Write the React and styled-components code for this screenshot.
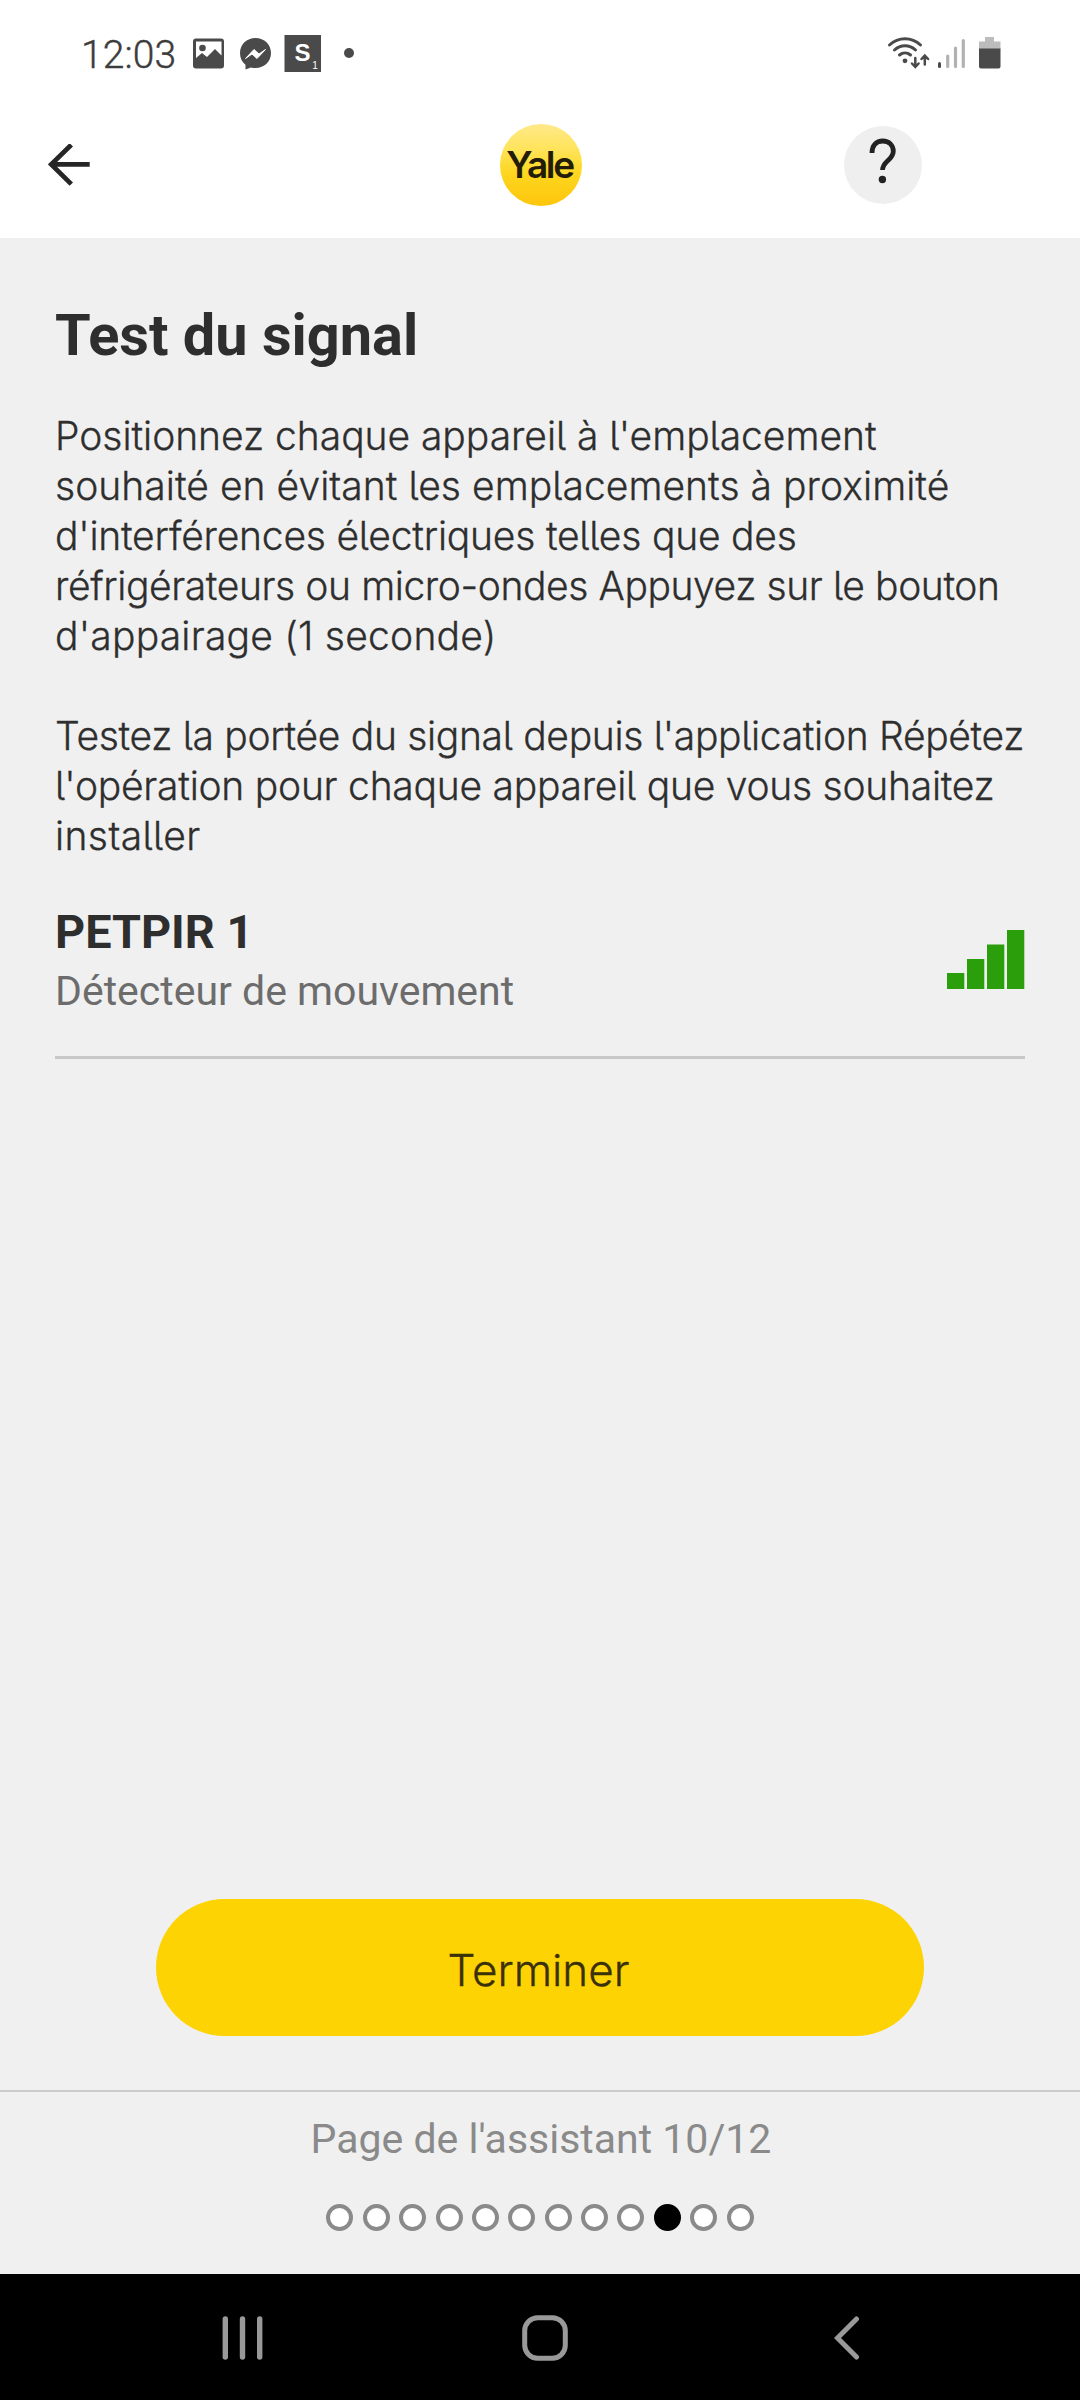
import React from 'react';
import styled, { createGlobalStyle } from 'styled-components';

const instructions = [
  { text: "Positionnez chaque appareil à l'emplacement", spacing: -0.04 },
  { text: 'souhaité en évitant les emplacements à proximité', spacing: 0.04 },
  { text: "d'interférences électriques telles que des", spacing: -0.22 },
  { text: 'réfrigérateurs ou micro-ondes Appuyez sur le bouton', spacing: -0.41 },
  { text: "d'appairage (1 seconde)", spacing: 0.22 },
];

const testing = [
  { text: "Testez la portée du signal depuis l'application Répétez", spacing: -0.32 },
  { text: "l'opération pour chaque appareil que vous souhaitez", spacing: -0.25 },
  { text: 'installer', spacing: 0.4 },
];

const TOTAL_PAGES = 12;
const CURRENT_PAGE = 10;

const StatusIcons = () => (
  <svg width="170" height="40" viewBox="190 33 170 40">
    <g fill="#4a4a4a">
      <path
        fillRule="evenodd"
        d="M196 38.500h25a3 3 0 0 1 3 3v24a3 3 0 0 1-3 3h-25a3 3 0 0 1-3-3v-24a3 3 0 0 1 3-3zM196 41.500V58l6-5 5 4 8-8 6.500 6.500V41.500z"
      />
      <circle cx="202.500" cy="48" r="3.300" />
      <path d="M255.500 38c8.800 0 15.500 6.400 15.500 15s-6.700 15-15.500 15c-1.600 0-3.100-.2-4.600-.6l-5.400 2.100v-4.700C242 62.100 240 58 240 53c0-8.600 6.700-15 15.500-15z" />
      <path d="M284.500 35H321v37h-36.500z" />
      <circle cx="349" cy="53" r="5" />
    </g>
    <path d="M245.500 58.500l8.500-9 5 4.500 6.500-4.500-8.500 9-5-4.500z" fill="#fff" stroke="#fff" strokeLinejoin="round" />
    <text x="302.500" y="61" fill="#fff" fontFamily="Liberation Sans" fontWeight="700" fontSize="24" textAnchor="middle">S</text>
    <text x="315" y="68.500" fill="#fff" fontFamily="Liberation Sans" fontSize="10" textAnchor="middle">1</text>
  </svg>
);

const ConnectionIcons = () => (
  <svg width="116" height="40" viewBox="886 32.500 116 40">
    <g fill="none" stroke="#4a4a4a" strokeWidth="3" strokeLinecap="round">
      <path d="M889.500 44.500c9-8.300 22-8.300 31 0M894.500 49.500c6-5.600 15-5.600 21 0M899.500 54.500c3.200-2.800 7.800-2.800 11 0" />
      <path strokeWidth="2.500" d="M915.300 57.500v8.500m-3.300-3l3.300 3.500 3.300-3.500M924.800 64v-8.500m-3.300 3l3.300-3.500 3.300 3.500" />
      <path d="M939.500 63v3" />
    </g>
    <circle cx="905" cy="60.300" r="2.400" fill="#4a4a4a" />
    <path d="M947.700 55.500v10.500M955.500 47.500v18.500M963.300 40v26" fill="none" stroke="#b2b2b2" strokeWidth="3.200" strokeLinecap="round" />
    <path d="M985 36.500h9v4.500h6.500v8H979v-8h6z" fill="#bcbcbc" />
    <path d="M979 48h21.500v18a2 2 0 0 1-2 2H981a2 2 0 0 1-2-2z" fill="#4a4a4a" />
  </svg>
);

const BackArrow = () => (
  <svg width="42" height="42" viewBox="48 144 42 42" fill="none" stroke="#262626" strokeWidth="4.800">
    <path d="M89.700 164.400H51M71.300 144.800L51.300 164.400l20 19.700" />
  </svg>
);

const HelpMark = () => (
  <svg width="78" height="78" viewBox="844 125.500 78 78">
    <path
      d="M872 152.500c0-7.500 4.300-12 10.800-12 6.300 0 10.500 4.300 10.500 10.200 0 8.800-10.800 9.800-10.800 18.800"
      fill="none"
      stroke="#222"
      strokeWidth="4.800"
    />
    <circle cx="882.400" cy="179" r="3.700" fill="#222" />
  </svg>
);

const SignalStrength = () => (
  <SignalIcon width="78" height="60" viewBox="947 930 78 60">
    <path d="M947 973h17.300v16H947zM967 959h17.300v30H967zM987 944.500h17.300V989H987zM1007 930h17.300v59H1007z" />
  </SignalIcon>
);

const Copy = ({ lines }) => (
  <Paragraph>
    {lines.map(({ text, spacing }) => (
      <Line key={text} $spacing={spacing}>{text}</Line>
    ))}
  </Paragraph>
);

const App = () => (
  <Screen>
    <GlobalStyle />
    <StatusBar>
      <Clock>12:03</Clock>
      <StatusIcons />
      <Spacer />
      <ConnectionIcons />
    </StatusBar>
    <Header>
      <BackButton aria-label="Retour"><BackArrow /></BackButton>
      <Logo><LogoText>Yale</LogoText></Logo>
      <HelpButton aria-label="Aide"><HelpMark /></HelpButton>
    </Header>
    <Content>
      <Title>Test du signal</Title>
      <Copy lines={instructions} />
      <Copy lines={testing} />
      <Device>
        <div>
          <DeviceName>PETPIR 1</DeviceName>
          <DeviceType>Détecteur de mouvement</DeviceType>
        </div>
        <SignalStrength />
      </Device>
    </Content>
    <FinishButton>Terminer</FinishButton>
    <Wizard>
      <WizardLabel>Page de l'assistant {CURRENT_PAGE}/{TOTAL_PAGES}</WizardLabel>
      <Dots>
        {Array.from({ length: TOTAL_PAGES }, (_, i) => (
          <Dot key={i} $active={i + 1 === CURRENT_PAGE} />
        ))}
      </Dots>
    </Wizard>
    <NavBar>
      <svg width="42" height="44" viewBox="0 0 42 44" stroke="#999" strokeWidth="5.400" strokeLinecap="round">
        <path d="M3.300 3v38M20.500 3v38M37.700 3v38" />
      </svg>
      <HomeIcon width="46" height="46" viewBox="0 0 46 46">
        <rect x="2.700" y="2.700" width="40.600" height="40.600" rx="13" />
      </HomeIcon>
      <svg width="26" height="44" viewBox="0 0 26 44" fill="none" stroke="#999" strokeWidth="5" strokeLinecap="round">
        <path d="M22.500 3L3.500 22l19 19" />
      </svg>
    </NavBar>
  </Screen>
);

export default App;

// region STYLES

const GlobalStyle = createGlobalStyle`
  * {
    box-sizing: border-box;
  }

  body {
    margin: 0;
    font-family: Roboto, sans-serif;
  }

  svg {
    display: block;
    flex: none;
  }
`;

const Screen = styled.div`
  display: flex;
  flex-direction: column;
  width: 1080px;
  height: 2400px;
  overflow: hidden;
  background: #f0f0f0;
  color: #2e2e2e;
`;

const StatusBar = styled.div`
  display: flex;
  align-items: center;
  height: 106px;
  padding: 0 78px 0 81px;
  background: #fff;
`;

const Clock = styled.span`
  width: 109px;
  padding-top: 3px;
  font-size: 39px;
  font-weight: 300;
  letter-spacing: 0.1px;
  color: #3c3c3c;
  -webkit-text-stroke: 0.4px #3c3c3c;
`;

const Spacer = styled.div`
  flex: 1;
`;

const Header = styled.header`
  display: grid;
  grid-template-columns: 452px 82px 1fr;
  align-items: center;
  height: 132px;
  padding: 0 158px 15px 48px;
  background: #fff;
`;

const BackButton = styled.button`
  width: 78px;
  padding: 0;
  border: 0;
  background: none;
`;

const Logo = styled.div`
  display: flex;
  align-items: center;
  justify-content: center;
  width: 82px;
  height: 82px;
  border-radius: 50%;
  background: linear-gradient(#ffe98a, #ffe45c 30%, #fdd61f 60%, #fdc60c);
`;

const LogoText = styled.span`
  padding-right: 3px;
  font-family: Inter, sans-serif;
  font-size: 37px;
  font-weight: 600;
  letter-spacing: -2.300px;
  color: #221c08;
`;

const HelpButton = styled.button`
  justify-self: end;
  width: 78px;
  height: 78px;
  padding: 0;
  border: 0;
  border-radius: 50%;
  background: #efefef;
`;

const Content = styled.main`
  flex: 1;
  padding: 64px 55px 0;
`;

const Title = styled.h1`
  margin: 0 0 43px;
  font-size: 57.700px;
  font-weight: 700;
  line-height: 66px;
`;

const Paragraph = styled.p`
  margin: 0 0 50px;
  font-family: Inter, sans-serif;
  font-size: 39px;
  font-weight: 300;
  line-height: 50px;
  font-feature-settings: 'cv05';
  -webkit-text-stroke: 0.3px #2e2e2e;
`;

const Line = styled.span`
  display: block;
  white-space: nowrap;
  letter-spacing: ${({ $spacing }) => $spacing}px;
`;

const Device = styled.div`
  display: flex;
  align-items: flex-start;
  justify-content: space-between;
  height: 161px;
  margin-top: -13px;
  padding-top: 5px;
  border-bottom: 3px solid #c8c8c8;
`;

const DeviceName = styled.h2`
  margin: 0;
  font-size: 46.800px;
  font-weight: 700;
  line-height: 59px;
`;

const DeviceType = styled.div`
  font-size: 41px;
  line-height: 58px;
  color: #6c6c6c;
`;

const SignalIcon = styled.svg`
  margin-top: 27px;
  fill: #2b9e0c;
`;

const FinishButton = styled.button`
  align-self: center;
  flex: none;
  width: 768px;
  height: 137px;
  margin-bottom: 54px;
  padding: 4px 3px 0 0;
  border: 0;
  border-radius: 69px;
  background: #fdd303;
  color: #3a3009;
  font-family: Inter, sans-serif;
  font-size: 44px;
  font-weight: 300;
  -webkit-text-stroke: 0.3px #3a3009;
`;

const Wizard = styled.footer`
  display: flex;
  flex-direction: column;
  align-items: center;
  height: 184px;
  padding-top: 21px;
  border-top: 2px solid #ccc;
`;

const WizardLabel = styled.div`
  padding-left: 2px;
  font-size: 41px;
  line-height: 52px;
  color: #8a8a8a;
`;

const Dots = styled.div`
  display: flex;
  gap: 9.400px;
  margin-top: 39px;
`;

const Dot = styled.i`
  width: 27px;
  height: 27px;
  border: 4px solid ${({ $active }) => ($active ? '#000' : '#8a8a8a')};
  border-radius: 50%;
  background: ${({ $active }) => ($active ? '#000' : '#fff')};
`;

const NavBar = styled.nav`
  display: flex;
  align-items: center;
  justify-content: space-between;
  flex: none;
  height: 126px;
  padding: 2px 220px 0 222px;
  background: #000;
`;

const HomeIcon = styled.svg`
  margin-right: 8px;
  fill: none;
  stroke: #999;
  stroke-width: 5px;
`;

// endregion
